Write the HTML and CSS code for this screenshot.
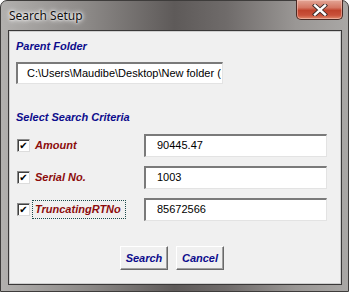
FILE: index.html
```html
<!DOCTYPE html>
<html lang="en">

<head>
    <meta charset="UTF-8">
    <title>Search Setup</title>
    <link rel="stylesheet" href="styles.css">
</head>

<body>
    <div class="window">
        <div class="titlebar">
            <span class="title">Search Setup</span>
            <span class="close">
                <svg width="16" height="12" viewBox="0 0 16 12">
                    <path d="M3 1.5 L13 10.5 M13 1.5 L3 10.5" stroke="#3a2a28" stroke-width="4.2" stroke-linecap="square"/>
                    <path d="M3 1.5 L13 10.5 M13 1.5 L3 10.5" stroke="#ffffff" stroke-width="2.4" stroke-linecap="square"/>
                </svg>
            </span>
        </div>

        <div class="client">
            <div class="heading">Parent Folder</div>
            <div class="textbox path"><span class="path-text">C:\Users\Maudibe\Desktop\New folder (3)</span></div>

            <div class="heading criteria">Select Search Criteria</div>

            <div class="row">
                <div class="check-group">
                    <span class="checkbox">&#10004;</span>
                    <span class="label">Amount</span>
                </div>
                <div class="textbox value">90445.47</div>
            </div>
            <div class="row">
                <div class="check-group">
                    <span class="checkbox">&#10004;</span>
                    <span class="label">Serial No.</span>
                </div>
                <div class="textbox value">1003</div>
            </div>
            <div class="row">
                <div class="check-group">
                    <span class="checkbox">&#10004;</span>
                    <span class="label focused">TruncatingRTNo</span>
                </div>
                <div class="textbox value">85672566</div>
            </div>

            <div class="buttons">
                <button class="bt">Search</button>
                <button class="bt">Cancel</button>
            </div>
        </div>
    </div>
</body>
</html>
```

FILE: styles.css
```css
body {
    margin: 0;
    padding: 0;
    background: #ffffff;
}
.window {
    width: 349px;
    height: 292px;
    box-sizing: border-box;
    border-radius: 7px 7px 0 0;
    background: linear-gradient(90deg, #b2b0ae 0%, #8c8987 25%, #5e5a59 50%, #6f6b6a 65%, #9a9795 85%, #a9a7a5 100%);
    border: 1px solid #3e3c3b;
    display: flex;
    flex-direction: column;
}
.titlebar {
    height: 29px;
    display: flex;
    align-items: flex-start;
    justify-content: space-between;
}
.title {
    font-family: "Noto Sans", "DejaVu Sans", sans-serif;
    font-size: 12px;
    color: #101010;
    margin: 6px 0 0 7px;
    padding: 0 6px 0 1px;
    text-shadow: 0 0 6px #ffffff, 0 0 4px #ffffff, 0 0 2px #f4f4f4;
}
.close {
    width: 47px;
    height: 20px;
    box-sizing: border-box;
    margin-right: 5px;
    margin-top: -1px;
    border: 1px solid #4a2a24;
    border-top: none;
    border-radius: 0 0 5px 5px;
    background: linear-gradient(180deg, #e3a696 0%, #d47763 40%, #c0432c 55%, #c9513a 80%, #e08a6c 100%);
    box-shadow: inset 0 0 0 1px rgba(255, 220, 210, 0.45);
    display: flex;
    align-items: center;
    justify-content: center;
}
.client {
    flex: 1;
    margin: 0 6px 6px 7px;
    border: 1px solid #3a3838;
    box-shadow: inset 0 0 0 1px #cfcfcf;
    background: #f0f0f0;
    padding: 8px 0 0 7px;
    display: flex;
    flex-direction: column;
    align-items: flex-start;
}
.heading {
    font-family: "Liberation Sans", Arial, sans-serif;
    font-weight: bold;
    font-style: italic;
    font-size: 11px;
    line-height: 15px;
    color: #0c0c8c;
}
.criteria {
    margin-top: 26px;
}
.textbox {
    box-sizing: border-box;
    height: 22px;
    background: #ffffff;
    border-top: 2px solid #7a7a7a;
    border-left: 2px solid #7a7a7a;
    border-right: 1px solid #e3e3e3;
    border-bottom: 1px solid #e3e3e3;
    font-family: "Liberation Sans", Arial, sans-serif;
    font-size: 11px;
    line-height: 18px;
    color: #000000;
    white-space: nowrap;
    overflow: hidden;
}
.path {
    width: 207px;
    padding-left: 9px;
    margin-top: 8px;
}
.path-text {
    display: inline-block;
    width: 194px;
    overflow: hidden;
}
.row {
    display: flex;
    align-items: center;
    height: 23px;
    margin-top: 9px;
}
.check-group {
    width: 128px;
    display: flex;
    align-items: center;
}
.checkbox {
    width: 13px;
    height: 13px;
    box-sizing: border-box;
    margin-left: 1px;
    background: #ffffff;
    border-top: 1px solid #8a8a8a;
    border-left: 1px solid #8a8a8a;
    border-right: 1px solid #dcdcdc;
    border-bottom: 1px solid #dcdcdc;
    box-shadow: inset 1px 1px 0 #404040;
    font-family: "DejaVu Sans", sans-serif;
    font-size: 10px;
    font-weight: bold;
    line-height: 12px;
    text-align: center;
    color: #000000;
}
.label {
    margin-left: 2px;
    padding: 1px 4px 2px 2px;
    border: 1px dotted transparent;
    font-family: "Liberation Sans", Arial, sans-serif;
    font-weight: bold;
    font-style: italic;
    font-size: 11px;
    line-height: 14px;
    color: #8c0c0c;
}
.focused {
    border-color: #1c4a4a;
}
.value {
    width: 183px;
    height: 23px;
    line-height: 19px;
    padding-left: 11px;
}
.buttons {
    display: flex;
    gap: 8px;
    margin-top: 25px;
    padding-left: 104px;
}
.bt {
    width: 48px;
    height: 24px;
    box-sizing: border-box;
    background: #f0f0f0;
    border-top: 1px solid #ffffff;
    border-left: 1px solid #ffffff;
    border-right: 1px solid #696969;
    border-bottom: 1px solid #696969;
    box-shadow: inset -1px -1px 0 #a0a0a0;
    padding: 0;
    font-family: "Liberation Sans", Arial, sans-serif;
    font-weight: bold;
    font-style: italic;
    font-size: 11px;
    color: #0c0c8c;
}
```
